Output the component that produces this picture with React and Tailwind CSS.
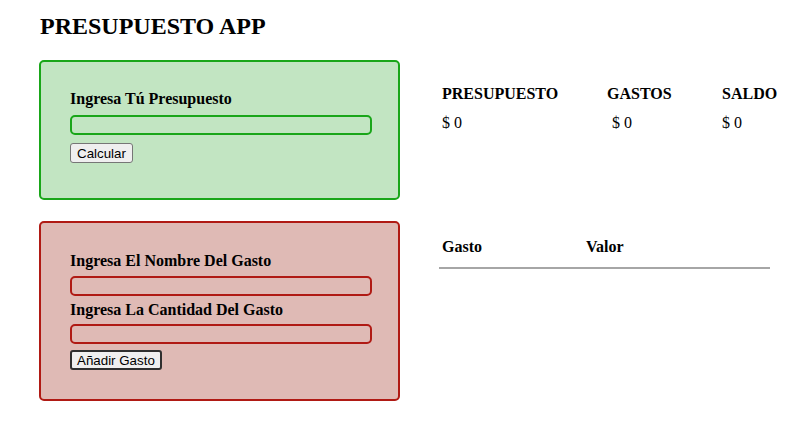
import React from "react";

const serif = { fontFamily: '"Liberation Serif", "Times New Roman", serif' };

function Btn({ children, focused }) {
  return (
    <button
      type="button"
      className={
        focused
          ? "block h-[20px] px-[5px] border-2 border-[#2f2f2f] rounded-[3px] bg-[#efefef] text-[13.33px] leading-[15px] text-black font-['Liberation_Sans',Arial,sans-serif]"
          : "block h-[20px] px-[6px] border border-[#767676] rounded-[3px] bg-[#efefef] text-[13.33px] leading-[15px] text-black font-['Liberation_Sans',Arial,sans-serif]"
      }
    >
      {children}
    </button>
  );
}

export default function App() {
  return (
    <div className="bg-white min-h-[428px] w-[811px] px-[39px] text-black" style={serif}>
      <h1 className="pt-[13px] mb-[20px] text-[24px] leading-[27px] font-bold pl-[1px]">PRESUPUESTO APP</h1>
      <div className="grid grid-cols-[361px_331px] gap-x-[39px] gap-y-[21px]">
        {/* Green box */}
        <div className="h-[140px] border-2 border-[#19a619] rounded-[5px] bg-[#c2e5c2] pl-[29px] pt-[28px] flex flex-col items-start">
          <label className="block text-[16px] leading-[18px] font-bold">Ingresa Tú Presupuesto</label>
          <input className="mt-[7px] w-[302px] h-[20px] border-2 border-[#19a619] rounded-[5px] bg-transparent outline-none" />
          <div className="mt-[8px]">
            <Btn>Calcular</Btn>
          </div>
        </div>

        {/* Right top */}
        <div className="pt-[25px] pl-[3px]">
          <div className="flex text-[16px] leading-[18px] font-bold">
            <div className="w-[165px] shrink-0">PRESUPUESTO</div>
            <div className="w-[115px] shrink-0">GASTOS</div>
            <div className="shrink-0">SALDO</div>
          </div>
          <div className="flex mt-[11px] text-[16px] leading-[18px]">
            <div className="w-[165px] shrink-0">$ 0</div>
            <div className="w-[115px] shrink-0 pl-[5px]">$ 0</div>
            <div className="shrink-0">$ 0</div>
          </div>
        </div>

        {/* Red box */}
        <div className="h-[180px] border-2 border-[#b01a14] rounded-[5px] bg-[#dfbab5] pl-[29px] pt-[29px] flex flex-col items-start">
          <label className="block text-[16px] leading-[18px] font-bold">Ingresa El Nombre Del Gasto</label>
          <input className="mt-[6px] w-[302px] h-[20px] border-2 border-[#b01a14] rounded-[5px] bg-transparent outline-none" />
          <label className="block mt-[5px] text-[16px] leading-[18px] font-bold">Ingresa La Cantidad Del Gasto</label>
          <input className="mt-[5px] w-[302px] h-[20px] border-2 border-[#b01a14] rounded-[5px] bg-transparent outline-none" />
          <div className="mt-[6px]">
            <Btn focused>Añadir Gasto</Btn>
          </div>
        </div>

        {/* Right bottom */}
        <div className="pt-[17px]">
          <div className="flex pl-[3px] text-[16px] leading-[18px] font-bold">
            <div className="w-[144px] shrink-0">Gasto</div>
            <div>Valor</div>
          </div>
          <div className="mt-[11px] h-[2px] w-[331px] bg-[#a6a6a6]" />
        </div>
      </div>
    </div>
  );
}
